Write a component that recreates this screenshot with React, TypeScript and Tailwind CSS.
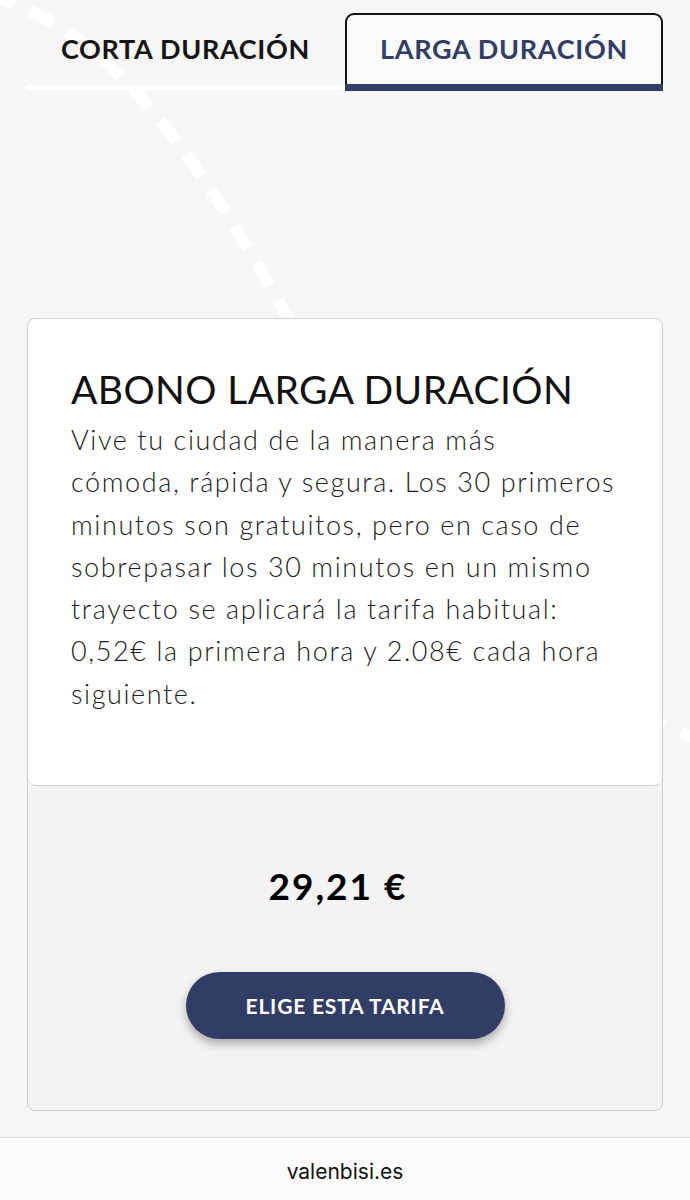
import React from "react";

const lines = [
  "Vive tu ciudad de la manera más",
  "cómoda, rápida y segura. Los 30 primeros",
  "minutos son gratuitos, pero en caso de",
  "sobrepasar los 30 minutos en un mismo",
  "trayecto se aplicará la tarifa habitual:",
  "0,52€ la primera hora y 2.08€ cada hora",
  "siguiente.",
];

const DashedTrail = () => (
  <svg
    className="absolute inset-0 pointer-events-none"
    width="690"
    height="1200"
    viewBox="0 0 690 1200"
  >
    <path
      d="M -10 -5 C 100 30 180 120 300 340 C 380 490 520 675 700 740"
      fill="none"
      stroke="#ffffff"
      strokeWidth="12"
      strokeDasharray="26 17"
    />
  </svg>
);

export default function App() {
  return (
    <div className="relative w-full min-h-[1200px] bg-[#f6f6f6] overflow-hidden flex flex-col font-['Lato',sans-serif]">
      <DashedTrail />

      <div className="relative flex-1 flex flex-col">
        {/* tabs */}
        <div className="flex px-[26px] pt-[13px]">
          <div className="w-[319px] h-[78px] flex flex-col">
            <div className="flex-1 flex items-center justify-center text-[27px] font-bold text-[#151515] tracking-[0.7px]">
              CORTA DURACIÓN
            </div>
            <div className="h-[5px] mb-[1px] bg-white" />
          </div>
          <div className="w-[318px] h-[78px] flex flex-col border-2 border-b-0 border-[#141414] rounded-t-[9px] bg-[#f9f9f9]">
            <div className="flex-1 flex items-center justify-center text-[27px] font-bold text-[#323d66] tracking-[0.7px]">
              LARGA DURACIÓN
            </div>
            <div className="h-[7px] -mx-[2px] bg-[#323d66]" />
          </div>
        </div>

        {/* card */}
        <div className="mx-[27px] mt-[227px] mb-[26px] border border-[#cfcfcf] rounded-[8px] bg-[#f3f3f3]">
          <div className="h-[467px] bg-white rounded-[8px] border-b border-[#cfcfcf] px-[43px] pt-[42px]">
            <h2 className="text-[39px] font-normal text-[#111] leading-[56px] tracking-[0.4px]">
              ABONO LARGA DURACIÓN
            </h2>
            <div className="mt-[2px] text-[27px] font-light text-[#1c1c1c] leading-[42.3px] tracking-[1.6px]">
              {lines.map((l) => (
                <div key={l} className="whitespace-nowrap">
                  {l}
                </div>
              ))}
            </div>
          </div>
          <div className="h-[324px] flex flex-col items-center">
            <div className="mt-[81px] mr-[14px] text-[37px] font-bold text-black leading-none tracking-[2px]">
              29,21 €
            </div>
            <button className="mt-[68px] w-[319px] h-[67px] rounded-full bg-[#323d66] text-white text-[21px] font-bold tracking-[0.8px] shadow-[0_5px_10px_rgba(0,0,0,0.3)]">
              ELIGE ESTA TARIFA
            </button>
          </div>
        </div>
      </div>

      {/* browser bar */}
      <div className="relative h-[63px] border-t border-[#e2e2e2] bg-[#fbfbfb] flex items-center justify-center pt-[6px]">
        <span className="font-['Inter',sans-serif] text-[21px] text-[#111]">
          valenbisi.es
        </span>
      </div>
    </div>
  );
}
